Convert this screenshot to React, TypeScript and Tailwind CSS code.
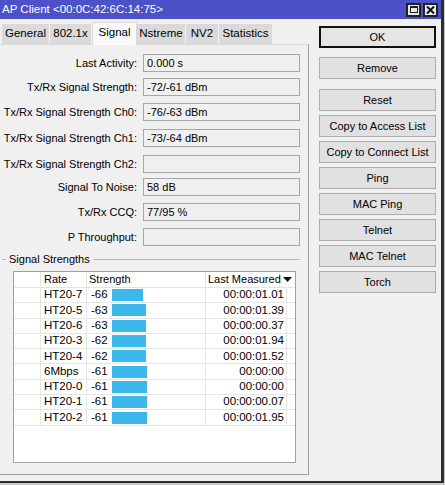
import React from 'react';

const fields: { label: string; value: string; mt: string }[] = [
  { label: 'Last Activity:', value: '0.000 s', mt: 'mt-[9px]' },
  { label: 'Tx/Rx Signal Strength:', value: '-72/-61 dBm', mt: 'mt-[6px]' },
  { label: 'Tx/Rx Signal Strength Ch0:', value: '-76/-63 dBm', mt: 'mt-[7px]' },
  { label: 'Tx/Rx Signal Strength Ch1:', value: '-73/-64 dBm', mt: 'mt-[8px]' },
  { label: 'Tx/Rx Signal Strength Ch2:', value: '', mt: 'mt-[8px]' },
  { label: 'Signal To Noise:', value: '58 dB', mt: 'mt-[5px]' },
  { label: 'Tx/Rx CCQ:', value: '77/95 %', mt: 'mt-[7px]' },
  { label: 'P Throughput:', value: '', mt: 'mt-[7px]' },
];

const rows = [
  { rate: 'HT20-7', s: '-66', w: 31, t: '00:00:01.01' },
  { rate: 'HT20-5', s: '-63', w: 34, t: '00:00:01.39' },
  { rate: 'HT20-6', s: '-63', w: 34, t: '00:00:00.37' },
  { rate: 'HT20-3', s: '-62', w: 34, t: '00:00:01.94' },
  { rate: 'HT20-4', s: '-62', w: 34, t: '00:00:01.52' },
  { rate: '6Mbps', s: '-61', w: 35, t: '00:00:00' },
  { rate: 'HT20-0', s: '-61', w: 35, t: '00:00:00' },
  { rate: 'HT20-1', s: '-61', w: 35, t: '00:00:00.07' },
  { rate: 'HT20-2', s: '-61', w: 35, t: '00:00:01.95' },
];

const tabs = ['General', '802.1x', 'Signal', 'Nstreme', 'NV2', 'Statistics'];
const tabW: Record<string, string> = {
  General: 'w-[48px]',
  '802.1x': 'w-[42px]',
  Signal: 'w-[45px]',
  Nstreme: 'w-[49px]',
  NV2: 'w-[33px]',
  Statistics: 'w-[54px]',
};

const buttons: { label: string; mt: string; ok?: boolean }[] = [
  { label: 'OK', mt: 'mt-0', ok: true },
  { label: 'Remove', mt: 'mt-[9px]' },
  { label: 'Reset', mt: 'mt-[10px]' },
  { label: 'Copy to Access List', mt: 'mt-[4px]' },
  { label: 'Copy to Connect List', mt: 'mt-[4px]' },
  { label: 'Ping', mt: 'mt-[4px]' },
  { label: 'MAC Ping', mt: 'mt-[4px]' },
  { label: 'Telnet', mt: 'mt-[4px]' },
  { label: 'MAC Telnet', mt: 'mt-[4px]' },
  { label: 'Torch', mt: 'mt-[4px]' },
];

export default function App() {
  return (
    <div
      className="w-[445px] h-[485px] overflow-hidden bg-[#c8c8c8] text-[11px] text-black whitespace-nowrap"
      style={{ fontFamily: '"Liberation Sans", Arial, sans-serif' }}
    >
      <div className="w-[444px] h-[483px] flex flex-col bg-[#f0f0f0] border-r-[3px] border-b-[2px] border-[#2e2e2e]">
        {/* title bar */}
        <div className="h-[19px] shrink-0 flex items-center bg-[#4c51c8] pl-[2px] pr-[3px]">
          <span className="text-white text-[11.5px] leading-none">AP Client &lt;00:0C:42:6C:14:75&gt;</span>
          <div className="ml-auto flex gap-[2px]">
            <div className="w-[15px] h-[14px] border-2 border-[#222] bg-[#e8e8e8] flex items-center justify-center">
              <div className="w-[8px] h-[7px] border border-[#222] border-t-2" />
            </div>
            <div className="w-[15px] h-[14px] border-2 border-[#222] bg-[#e8e8e8] flex items-center justify-center">
              <svg width="9" height="8" viewBox="0 0 9 8">
                <path d="M1 0.5 L8 7.5 M8 0.5 L1 7.5" stroke="#111" strokeWidth="2" />
              </svg>
            </div>
          </div>
        </div>

        <div className="flex flex-1">
          {/* left: tabs + panel */}
          <div className="w-[309px] flex flex-col">
            <div className="h-[25px] flex items-end pl-[2px]">
              {tabs.map((t) =>
                t === 'Signal' ? (
                  <div
                    key={t}
                    className={`${tabW[t]} h-[23px] -mb-px relative z-10 bg-[#f9f9f9] border border-b-0 border-[#d9d9d9] flex items-center justify-center pb-[3px] text-[11.5px]`}
                  >
                    {t}
                  </div>
                ) : (
                  <div
                    key={t}
                    className={`${tabW[t]} h-[20px] bg-[#dadada] border-r border-[#f4f4f4] flex items-center justify-center text-[11.5px]`}
                  >
                    {t}
                  </div>
                )
              )}
            </div>

            <div className="flex-1 flex flex-col border-t border-[#d9d9d9] border-r border-b border-r-[#a0a0a0] border-b-[#a0a0a0] mb-[6px]">
              {fields.map((f) => (
                <div key={f.label} className={`${f.mt} flex items-center`}>
                  <div className="w-[138px] text-right pr-[1px] leading-none">{f.label}</div>
                  <div className="ml-[5px] w-[157px] h-[18px] border border-[#a6a6a6] bg-[#f0f0f0] flex items-center pl-[3px] leading-none">
                    {f.value}
                  </div>
                </div>
              ))}

              {/* group title */}
              <div className="mt-[6px] flex items-center h-[14px] pl-[2px] pr-[8px]">
                <div className="w-[4px] h-px bg-[#b8b8b8]" />
                <span className="px-[3px] leading-none">Signal Strengths</span>
                <div className="flex-1 h-px bg-[#b8b8b8]" />
              </div>

              {/* table */}
              <div className="mt-[5px] ml-[13px] w-[283px] h-[192px] border border-[#a0a0a0] bg-white flex flex-col">
                <div className="h-[16px] shrink-0 flex border-b border-[#e3e3e3] leading-none">
                  <div className="w-[27px] border-r border-[#e3e3e3]" />
                  <div className="w-[46px] border-r border-[#e3e3e3] pl-[3px] flex items-center">Rate</div>
                  <div className="w-[119px] border-r border-[#e3e3e3] pl-[2px] flex items-center">Strength</div>
                  <div className="w-[74px] border-r border-[#e3e3e3] pl-[2px] flex items-center">Last Measured</div>
                  <div className="flex-1 flex items-center justify-center">
                    <svg width="9" height="5" viewBox="0 0 9 5">
                      <path d="M0 0 H9 L4.5 5 Z" fill="#111" />
                    </svg>
                  </div>
                </div>
                {rows.map((r) => (
                  <div key={r.rate} className="h-[15.3px] shrink-0 flex border-b border-[#e6e6e6] leading-none text-[11.5px]">
                    <div className="w-[27px] border-r border-[#e6e6e6]" />
                    <div className="w-[46px] border-r border-[#e6e6e6] pl-[3px] flex items-center">{r.rate}</div>
                    <div className="w-[119px] border-r border-[#e6e6e6] pl-[4px] flex items-center">
                      <span className="w-[21px]">{r.s}</span>
                      <div className="h-[12px] bg-[#3cb7ea]" style={{ width: r.w }} />
                    </div>
                    <div className="w-[81px] border-r border-[#e6e6e6] pr-[2px] flex items-center justify-end">{r.t}</div>
                    <div className="flex-1" />
                  </div>
                ))}
              </div>
            </div>
          </div>

          {/* right: buttons */}
          <div className="ml-[10px] mt-[7px] w-[117px] flex flex-col">
            {buttons.map((b) => (
              <div
                key={b.label}
                className={`${b.mt} h-[22px] flex items-center justify-center border ${
                  b.ok ? 'border-[#111] shadow-[inset_0_0_0_1px_#111] bg-[#e5e5e5]' : 'border-[#adadad] bg-[#e1e1e1]'
                } leading-none`}
              >
                {b.label}
              </div>
            ))}
          </div>
        </div>
      </div>
    </div>
  );
}
